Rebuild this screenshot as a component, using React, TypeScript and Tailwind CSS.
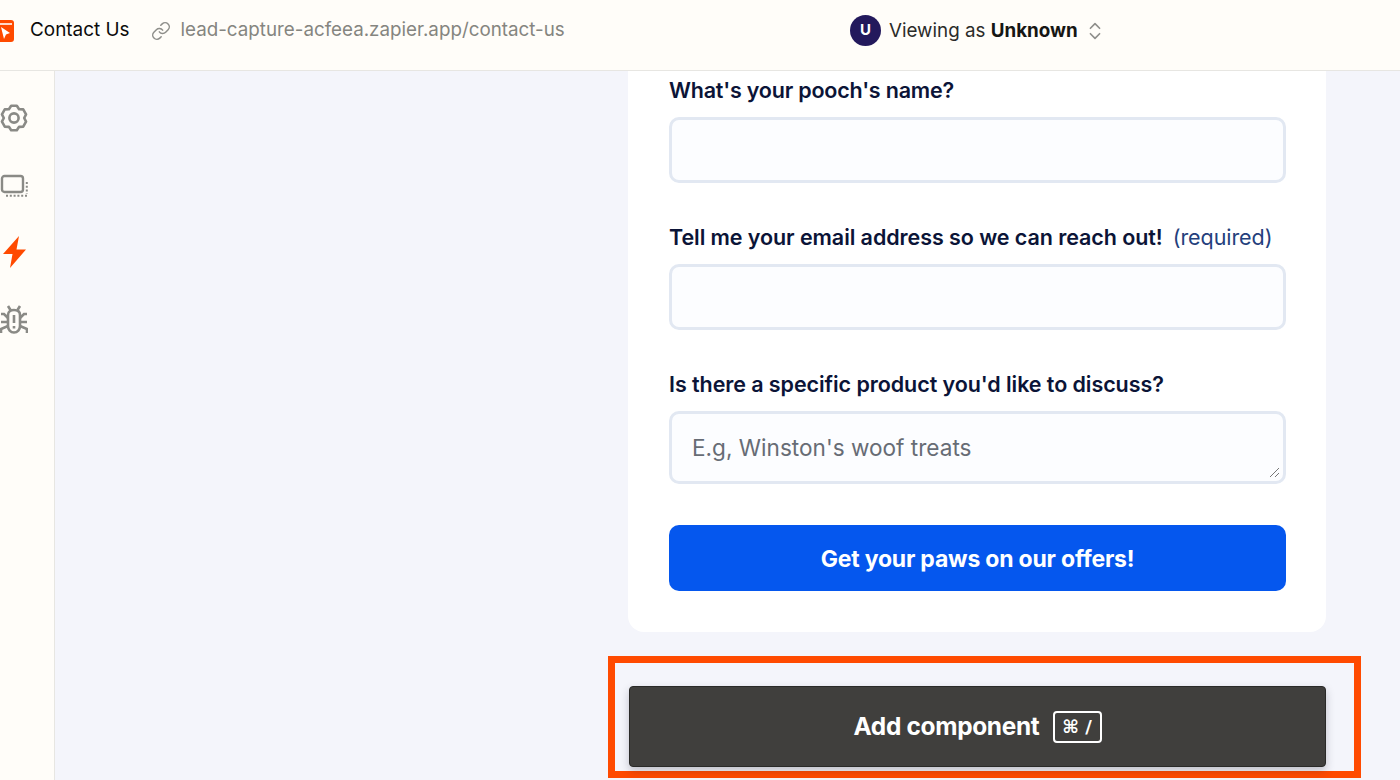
import { Link, ChevronsUpDown } from 'lucide-react';

const fontStack = { fontFamily: 'Inter, "Liberation Sans", sans-serif' };

function FieldLabel({ text, hint, tight }: { text: string; hint?: string; tight?: boolean }) {
  return (
    <div className={`flex items-center h-[24px] text-[21.5px] font-semibold text-[#0b1437] ${tight ? 'tracking-[-0.2px]' : 'tracking-[-0.07px]'}`}>
      <span>{text}</span>
      {hint && <span className="ml-[10px] font-normal text-[#24407c]">{hint}</span>}
    </div>
  );
}

// six broad teeth with shallow notches between them
const gearPoints = [-90, -30, 30, 90, 150, 210]
  .flatMap((a) => [
    [a - 30, 10.2],
    [a - 13, 12.6],
    [a + 13, 12.6],
  ])
  .map(([a, r]) => `${(14 + r * Math.cos((a * Math.PI) / 180)).toFixed(2)},${(14 + r * Math.sin((a * Math.PI) / 180)).toFixed(2)}`)
  .join(' ');

function GearIcon() {
  return (
    <svg width="28" height="28" viewBox="0 0 28 28" fill="none" stroke="#8a8a86" strokeWidth="2.6" strokeLinejoin="round">
      <polygon points={gearPoints} />
      <circle cx="14" cy="14" r="4.6" />
    </svg>
  );
}

function ScreensIcon() {
  return (
    <svg width="28" height="24" viewBox="0 0 28 24" fill="none" stroke="#8a8a86" strokeWidth="2.4">
      <rect x="2" y="2" width="21" height="16" rx="2.5" />
      <path d="M6 21.800h21M26.800 8v12" strokeDasharray="2 1.800" strokeWidth="2" />
    </svg>
  );
}

function BoltIcon() {
  return (
    <svg width="23" height="32" viewBox="0 0 23 32">
      <path d="M16 0 0 18h9.500L7 32 23 13.500h-9.500z" fill="#ff4a00" />
    </svg>
  );
}

function BugIcon() {
  return (
    <svg width="28" height="30" viewBox="0 0 28 30" fill="none" stroke="#8a8a86" strokeWidth="2.600">
      <path d="M8 1l2.500 4M20 1l-2.500 4" />
      <path d="M8 10c0-3.500 2.500-5 6-5s6 1.500 6 5v11c0 3.500-2.500 6.500-6 6.500S8 24.500 8 21z" />
      <path d="M1 9h3l4 4M27 9h-3l-4 4M1 17h7M27 17h-7M1 28v-4l7-3M27 28v-4l-7-3" />
      <path d="M14 10v8M14 21v2.500" />
    </svg>
  );
}

export default function App() {
  return (
    <div className="w-[1400px] h-[780px] overflow-hidden bg-[#f4f5fb] flex flex-col" style={fontStack}>
      {/* Top bar */}
      <div className="h-[71px] shrink-0 bg-[#fffdf9] border-b border-[#e7e6e2] flex items-center pb-[9px] relative">
        <div className="w-[14px] h-[22px] bg-[#ff4a00] rounded-r-[3px] relative overflow-hidden">
          <div className="absolute left-0 right-[2px] top-[3px] h-[2px] bg-[#ffd9c9]" />
          <svg className="absolute left-0 top-[7px]" width="11" height="13" viewBox="0 0 11 13">
            <path d="M1 0l9 6-4 1.500-2 4.500z" fill="#fff" />
          </svg>
        </div>
        <span className="ml-[16px] text-[18.9px] text-[#0b0b0b]">Contact Us</span>
        <Link className="ml-[22px] text-[#8f8f8b]" size={20} strokeWidth={1.8} />
        <span className="ml-[9px] text-[18.8px] text-[#858580]">lead-capture-acfeea.zapier.app/contact-us</span>
        <div className="absolute left-[850px] top-[15px] flex items-center">
          <div className="w-[31px] h-[31px] rounded-full bg-[#23195c] flex items-center justify-center text-white text-[15px] font-bold">
            U
          </div>
          <span className="ml-[8px] pt-[1px] text-[18.8px] text-[#2b2b29]">
            Viewing as <span className="font-bold text-[#161614]">Unknown</span>
          </span>
          <ChevronsUpDown className="ml-[6px] text-[#8f8f8b]" size={22} strokeWidth={1.8} />
        </div>
      </div>

      <div className="flex flex-1 min-h-0">
        {/* Side rail */}
        <div className="w-[55px] shrink-0 bg-[#fffdf9] border-r border-[#e7e6e2] flex flex-col items-start pt-[33px]">
          <GearIcon />
          <div className="mt-[42px] h-[24px]"><ScreensIcon /></div>
          <div className="mt-[38px] ml-[3px] h-[32px]"><BoltIcon /></div>
          <div className="mt-[37px] h-[30px]"><BugIcon /></div>
        </div>

        {/* Canvas */}
        <div className="flex-1 pl-[573px]">
          <div className="w-[698px] h-[561px] bg-white rounded-b-[16px] pl-[41px] pr-[40px] pt-[7px]">
            <FieldLabel text="What's your pooch's name?" tight />
            <div className="mt-[15px] h-[66px] rounded-[10px] border-[3px] border-[#e2e8f2] bg-[#fcfdff]" />

            <div className="mt-[42px]">
              <FieldLabel text="Tell me your email address so we can reach out!" hint="(required)" />
            </div>
            <div className="mt-[15px] h-[66px] rounded-[10px] border-[3px] border-[#e2e8f2] bg-[#fcfdff]" />

            <div className="mt-[42px]">
              <FieldLabel text="Is there a specific product you'd like to discuss?" />
            </div>
            <div className="relative mt-[15px] h-[73px] rounded-[10px] border-[3px] border-[#e2e8f2] bg-[#fcfdff] flex items-center pl-[20px] text-[22.6px] text-[#676c75]">
              E.g, Winston's woof treats
              <svg className="absolute right-[3px] bottom-[3px]" width="11" height="11" viewBox="0 0 11 11" stroke="#777" strokeWidth="1">
                <path d="M1 10 10 1M6 10l4-4" />
              </svg>
            </div>

            <button className="mt-[41px] w-full h-[66px] pt-[2px] rounded-[10px] bg-[#0557ee] text-white text-[23px] font-bold tracking-[-0.2px]">
              Get your paws on our offers!
            </button>
          </div>

          {/* Highlighted add button */}
          <div className="mt-[24px] -ml-[20px] w-[753px] h-[122px] border-[7px] border-[#ff4a00] pl-[14px] pr-[28px] pt-[23px]">
            <button className="w-full h-[81px] rounded-[4px] bg-[#403f3d] border border-[#2a2a28] shadow-[0_4px_8px_rgba(40,40,60,0.25)] flex items-center justify-center text-white">
              <span className="text-[24.4px] font-bold tracking-[-0.3px]">Add component</span>
              <span className="ml-[13px] w-[49px] h-[32px] rounded-[4px] border-2 border-white flex items-center justify-center text-[18px] font-bold" style={{ fontFamily: '"DejaVu Sans", sans-serif' }}>
                ⌘ /
              </span>
            </button>
          </div>
        </div>
      </div>
    </div>
  );
}
